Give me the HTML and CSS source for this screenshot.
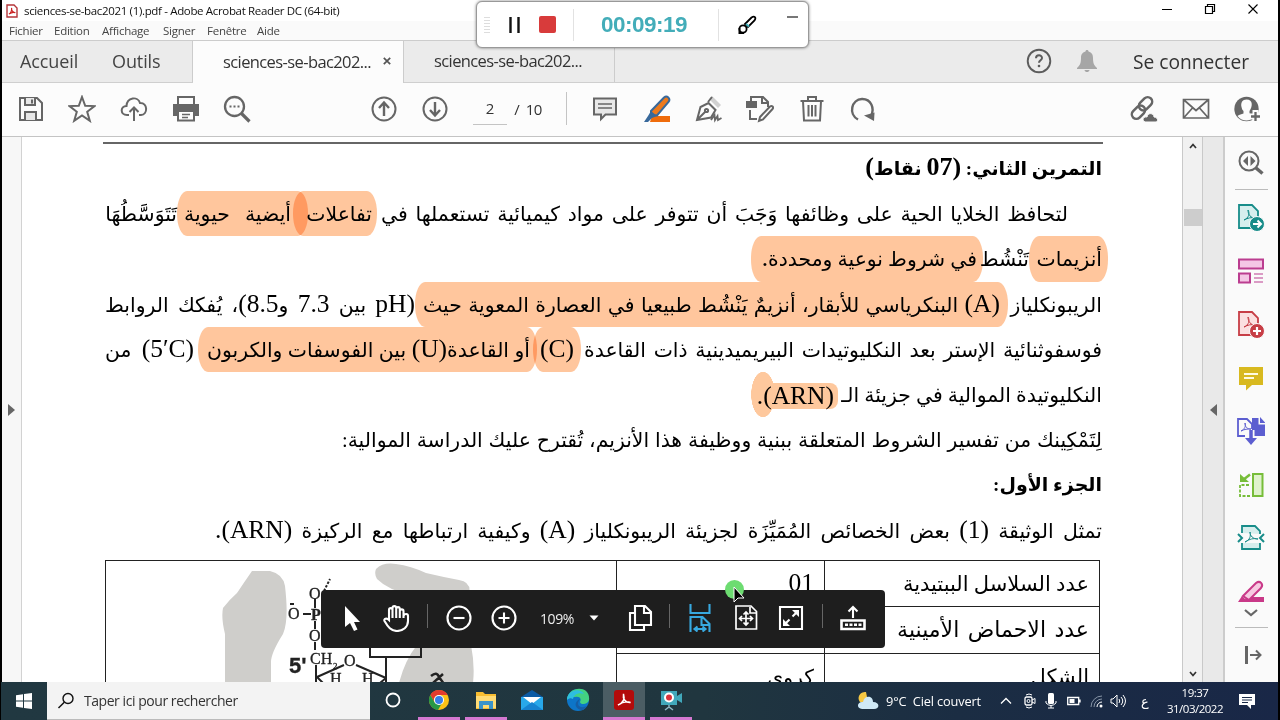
FILE: index.html
```html
<!DOCTYPE html>
<html lang="fr">
<head>
    <meta charset="UTF-8">
    <meta name="viewport" content="width=device-width, initial-scale=1.0">
    <title>sciences-se-bac2021 (1).pdf - Adobe Acrobat Reader DC (64-bit)</title>
    <link rel="stylesheet" href="styles.css">
</head>
<body>
    <div class="app">
        <header class="titlebar">
            <svg class="pdf-logo" viewBox="0 0 12 14"><path d="M1 1h7l3 3v9H1z" fill="#fff" stroke="#b5363a" stroke-width="1.4"/><path d="M3 10c2-1 3-4 2.600-6C5 6 7 9 9.300 8.500 7 8 5 8.500 3 10z" fill="none" stroke="#c22" stroke-width="1.200"/></svg>
            <span class="window-title">sciences-se-bac2021 (1).pdf - Adobe Acrobat Reader DC (64-bit)</span>
            <div class="window-buttons">
                <svg width="12" height="12" viewBox="0 0 12 12"><path d="M1 6.500h10" stroke="#000"/></svg>
                <svg width="12" height="12" viewBox="0 0 12 12"><path d="M1.500 3.500h7v7h-7zM3.500 3.500v-2h7v7h-2" fill="none" stroke="#000" stroke-width="1.200"/></svg>
                <svg width="12" height="12" viewBox="0 0 12 12"><path d="M1.500 1.500l9 9M10.500 1.500l-9 9" stroke="#000" stroke-width="1.100"/></svg>
            </div>
        </header>

        <nav class="menubar">
            <span class="m1">Fichier</span><span class="m2">Edition</span><span class="m3">Affichage</span><span class="m4">Signer</span><span class="m5">Fenêtre</span><span class="m6">Aide</span>
        </nav>

        <div class="tabs">
            <div class="tab-home"><span class="home">Accueil</span><span class="tools">Outils</span></div>
            <div class="tab active"><span>sciences-se-bac202...</span><svg width="8" height="8" viewBox="0 0 8 8"><path d="M.8.8l6.400 6.400M7.200.8L.8 7.200" stroke="#555" stroke-width="1.700"/></svg></div>
            <div class="tab"><span>sciences-se-bac202...</span></div>
            <div class="account">
                <svg width="26" height="26" viewBox="0 0 26 26"><circle cx="13" cy="13" r="11.300" fill="none" stroke="#5c5c5c" stroke-width="1.900"/><path d="M10 10.300c0-4 6-3.900 6-.4 0 2.300-3 2.300-3 4.800" fill="none" stroke="#5c5c5c" stroke-width="2"/><circle cx="13" cy="18" r="1.300" fill="#5c5c5c"/></svg>
                <svg class="bell" width="22" height="24" viewBox="0 0 22 24"><path d="M11 1c1 0 1.500.6 1.500 1.600C16 3.500 17 6 17 9c0 5 1 7.500 4 10v1H1v-1c3-2.500 4-5 4-10 0-3 1-5.500 4.500-6.400C9.500 1.600 10 1 11 1zM8.500 21h5c-.5 2.700-4.500 2.700-5 0z" fill="#a6a6a6"/></svg>
                <span>Se connecter</span>
            </div>
        </div>

        <div class="toolbar">
            <div class="group file">
                <svg viewBox="0 0 28 28"><path d="M3 3h17l5 5v17H3z"/><path d="M8 3v7h10V3M15 4.500v4M8 25v-8h11v8" fill="#e8e8e8"/></svg>
                <svg viewBox="0 0 28 28"><path d="M14 2l3.200 8.800 9.300.3-7.300 5.700 2.600 9L14 20.500 6.200 25.800l2.600-9L1.500 11.100l9.300-.3z"/></svg>
                <svg viewBox="0 0 28 28"><path d="M9 20H7c-7 0-7-9-.5-9C7 2 18 1 20 8c8-.5 8 11.500 1 12h-2M14 26V13M9.500 17L14 12.500l4.500 4.500"/></svg>
                <svg viewBox="0 0 28 28"><path d="M6 9V2h16v7"/><path d="M1 9h26v12h-4v-4H5v4H1z" fill="#666" stroke="none"/><path d="M6 16h16v9.500H6z" fill="#fcfcfc"/><path d="M10 19.500h8M10 22.500h6" stroke-width="1.500"/></svg>
                <svg viewBox="0 0 28 28"><circle cx="11.500" cy="11.500" r="9.500" stroke-width="2.300"/><path d="M18.500 18.500l8 8" stroke-width="3.200"/><path d="M6.500 11.500h2M10.500 11.500h2M14.500 11.500h2"/></svg>
            </div>
            <div class="group pages">
                <svg viewBox="0 0 28 28"><circle cx="14" cy="14" r="11.500"/><path d="M14 21V8M9 13l5-5.500 5 5.500" stroke-width="2.400"/></svg>
                <svg viewBox="0 0 28 28"><circle cx="14" cy="14" r="11.500"/><path d="M14 7v13M9 15l5 5.500 5-5.500" stroke-width="2.400"/></svg>
            </div>
            <span class="page-input">2</span><span class="slash">/</span><span class="page-count">10</span>
            <span class="sep"></span>
            <div class="group edit">
                <svg viewBox="0 0 28 28"><path d="M3 3.500h22v16H14.500L10 24v-4.500H3z" fill="#e8e8e8"/><path d="M7 9h14M7 13h14" stroke-width="1.500"/></svg>
                <svg viewBox="0 0 28 28"><path d="M9 21h18v6H7z" fill="#ef6c0c" stroke="none"/><path d="M8 16L21 2.500c3-2.500 7 1 4.500 4.500L14 20.500 8 20z" fill="#ed7a1d" stroke="#38699b"/><path d="M8 16l6 5-5 2-4 4H1l4-6z" fill="#38699b" stroke="none"/></svg>
                <svg viewBox="0 0 28 28"><path d="M14 4l3-3 9 9-3 3z" fill="#d0d0d0" stroke="none"/><path d="M2 25L5.500 12l8-4 7 7-4.500 7.500zM2 25l8.500-8.500M13 7l4-5"/><circle cx="11.500" cy="15.500" r="1.600"/><path d="M16 25l3.500-5 .5 5 2.500-4 .5 4 3.500-2" stroke-width="1.800"/></svg>
                <svg viewBox="0 0 28 28"><path d="M5 7V2h12l5 5v5M16 3v5h6M4 15v9h7"/><path d="M0 6h11v7H0z" fill="#666" stroke="none"/><path d="M13 26l1-4L24 11.500c2-1.500 4 .7 2.500 2.500L17 24.500z"/></svg>
                <svg viewBox="0 0 28 28"><path d="M2.500 6h23M10 6V2h8v4M5 6l1 19.500h16L23 6M10.500 10v11.500M14 10v11.500M17.500 10v11.500"/></svg>
                <svg viewBox="0 0 28 28"><path d="M9 24.500C-1 19 2.500 4.500 13 4c9-.2 13 9 9 17" stroke-width="2.400"/><path d="M15 20.500l10.500-3-.5 8.500z" fill="#666" stroke="none"/></svg>
            </div>
            <div class="group share">
                <svg viewBox="0 0 28 28"><g transform="rotate(-45 12 13)"><rect x="-1" y="9" width="15" height="9" rx="4.500" stroke-width="2.500"/><rect x="10" y="8" width="15" height="9" rx="4.500" stroke-width="2.500"/></g><path d="M15 27c-4-2-1-6 2-5 1-5 7-4 7 0 4 0 5 5 1 5z" fill="#666" stroke="#fcfcfc" stroke-width="1"/></svg>
                <svg viewBox="0 0 28 28"><path d="M1.500 4.500h25v18.500h-25zM2 5l12 10.500L26 5M2 22.500L10.500 13M26 22.500L17.500 13" stroke-width="1.700"/></svg>
                <svg viewBox="0 0 28 28"><circle cx="13.500" cy="14" r="12.200" fill="#666" stroke="none"/><path d="M13.500 4.500c-4 0-6 3-5 7.500.4 2 1 3 2 4v2.500c-2 1-4 1-6 2.500 2 3 6 4.500 9 4.500s5-1 8-4.500c-1-1.500-3-1.500-5-2.500V16c3-4 4-11.500-3-11.500z" fill="#fcfcfc" stroke="none"/><path d="M22.500 15v13M16 21.500h12" stroke="#fcfcfc" stroke-width="6"/><path d="M22.500 17v9M18 21.500h9" stroke-width="2.300"/></svg>
            </div>
        </div>

        <main class="workspace">
            <aside class="nav-strip"><i class="arrow right"></i></aside>

            <section class="document" lang="ar" dir="rtl">
                <div class="line bold"><span class="s1">التمرين الثاني: <em>(07</em> نقاط<em>)</em></span></div>
                <div class="line indent">
                    <span class="s2a">لتحافظ الخلايا الحية على وظائفها وَجَبَ أن تتوفر على مواد كيميائية تستعملها في</span>
                    <span class="s2b mark">تفاعلات</span>
                    <span class="s2c mark">أيضية حيوية</span>
                    <span class="s2d">تَتَوَسَّطُهَا</span>
                </div>
                <div class="line">
                    <span class="s3a mark">أنزيمات</span>
                    <span class="s3b">تَنْشُط</span>
                    <span class="s3c mark">في شروط نوعية ومحددة<b>.</b></span>
                </div>
                <div class="line">
                    <span class="s4a">الريبونكلياز</span>
                    <span class="s4b mark"><b>(A)</b> البنكرياسي للأبقار، أنزيمٌ يَنْشُط طبيعيا في العصارة المعوية حيث</span>
                    <span class="s4c"><b>(pH</b> بين <b>7.3</b> و<b>8.5)</b>، يُفكك الروابط</span>
                </div>
                <div class="line">
                    <span class="s5a">فوسفوثنائية الإستر بعد النكليوتيدات البيريميدينية ذات القاعدة</span>
                    <span class="s5b mark"><b>(C)</b></span>
                    <span class="s5c mark">أو القاعدة<b>(U)</b> بين الفوسفات والكربون</span>
                    <span class="s5d"><b>(5′C)</b> من</span>
                </div>
                <div class="line">
                    <span class="s6a">النكليوتيدة الموالية في جزيئة الـ</span>
                    <span class="s6b"><b>(ARN).</b></span>
                </div>
                <div class="line"><span class="s7">لِتَمْكِينك من تفسير الشروط المتعلقة ببنية ووظيفة هذا الأنزيم، تُقترح عليك الدراسة الموالية:</span></div>
                <div class="line bold"><span class="s8">الجزء الأول:</span></div>
                <div class="line"><span class="s9">تمثل الوثيقة <b>(1)</b> بعض الخصائص المُمَيِّزَة لجزيئة الريبونكلياز <b>(A)</b> وكيفية ارتباطها مع الركيزة <b>(ARN).</b></span></div>

                <div class="grid">
                    <div class="names"><span class="r1">عدد السلاسل الببتيدية</span><span class="r2">عدد الاحماض الأمينية</span><span class="r3">الشكل</span></div>
                    <div class="values"><span><b>01</b></span><span></span><span>كروي</span></div>
                    <svg class="molecule" direction="ltr" width="511" height="122" viewBox="106 561 511 122">
                        <path d="M253 571H271Q284 574 286 586C288 604 289 622 284 634Q272 653 272 662V683H226V634Q222 618 224 608Q230 600 238 593 246 581 253 571zM377 569Q384 562 397 564 412 566 427 573 444 577 460 580 473 582 470 595H412Q389 590 378 579 375 574 377 569zM400 683Q406 660 418 645H472Q476 665 474 683z" fill="#cfcecb"/>
                        <g fill="none" stroke="#222" stroke-width="2">
                            <path d="M316 599v9M316 621v8M316 642v8M317 665v18M304 614h8M291 604h4"/>
                            <path d="M325 591l6-12" stroke-dasharray="2.500 1.500"/>
                            <path d="M318 677l27-12M357 665l30 13M387 683v-26M371 648v9h51v-9M318 677l6 6M387 678l-6 5"/>
                        </g>
                        <g class="atoms">
                            <text x="310" y="599">O</text><text x="289" y="619">O</text><text class="strong" x="312" y="620">P</text><text x="310" y="641">O</text><text x="311" y="664">CH</text><text class="small" x="334" y="669">2</text><text x="345" y="666">O</text><text x="331" y="684">H</text><text x="363" y="684">H</text><text class="five" x="290" y="673">5'</text>
                        </g>
                        <path d="M432 676q6-5 8 1l5 7M444 674l-10 9" fill="none" stroke="#222" stroke-width="2.500"/>
                    </svg>
                </div>
            </section>

            <div class="scrollbar">
                <svg width="8" height="6" viewBox="0 0 8 6"><path d="M1 5l3-3.500L7 5" fill="none" stroke="#333" stroke-width="1.700"/></svg>
                <i class="thumb"></i>
                <svg width="8" height="6" viewBox="0 0 8 6"><path d="M1 1l3 3.500L7 1" fill="none" stroke="#333" stroke-width="1.700"/></svg>
            </div>
            <div class="panel-strip"><i class="arrow left"></i></div>

            <aside class="tool-panel">
                <svg class="find" viewBox="0 0 28 28"><g fill="none" stroke="#666"><circle cx="12" cy="13" r="9.500" stroke-width="2"/><path d="M19 20l6.500 5.500" stroke-width="3.500"/></g><path d="M11 8v10l-5-5zM13.500 8v10l5-5z" fill="#666"/></svg>
                <hr>
                <svg viewBox="0 0 28 28"><path d="M2 2h13l6 6v17H2z" fill="#d6eeed" stroke="#178c89" stroke-width="1.800"/><path d="M7 17c5-2 6-7 4-10 0 5 3 8 7 8-4-1-7 0-11 2z" fill="none" stroke="#178c89"/><circle cx="20" cy="21" r="7.500" fill="#178c89" stroke="#fafafa"/><path d="M16 21h7M20.500 17.500L24 21l-3.500 3.500" fill="none" stroke="#fff" stroke-width="2"/></svg>
                <svg viewBox="0 0 28 28"><path d="M2 2.500h24v9H2zM2 16.500h11v9H2z" fill="#f4c6e5" stroke="#bb3d90" stroke-width="2"/><path d="M17 17h9M17 21h9M17 25h9" stroke="#bb3d90"/></svg>
                <svg viewBox="0 0 28 28"><path d="M2 2h13l6 6v17H2z" fill="#fbe0e0" stroke="#c73e46" stroke-width="1.800"/><path d="M7 17c5-2 6-7 4-10 0 5 3 8 7 8-4-1-7 0-11 2z" fill="none" stroke="#c73e46"/><circle cx="20" cy="21" r="7.500" fill="#c73e46" stroke="#fafafa"/><path d="M16 21h8M20 17v8" stroke="#fff" stroke-width="2.200"/></svg>
                <svg viewBox="0 0 28 28"><path d="M2 3h24v18H15l-6 5.500V21H2z" fill="#d8b91f"/><path d="M7 10h14M7 14h10" stroke="#fffbe0" stroke-width="1.800"/></svg>
                <svg viewBox="0 0 28 28"><path d="M15 1h6.500v6.500H28V19H15z" fill="#5c5ed0"/><path d="M23 0l5.500 6H23z" fill="#5c5ed0"/><path d="M8 19H1V2h9l5 5v5" fill="#fafafa" stroke="#5c5ed0" stroke-width="1.800"/><path d="M4 14c4-2 5-5 4-8 0 4 2 6 6 6-4 0-6 0-10 2z" fill="none" stroke="#5c5ed0"/><path d="M14 13v9" stroke="#fafafa" stroke-width="7"/><path d="M14 13v9" stroke="#5c5ed0" stroke-width="3.500"/><path d="M8 21h12l-6 7z" fill="#5c5ed0"/></svg>
                <svg viewBox="0 0 28 28"><path d="M16 3h9.500v22H16z" fill="#dff2cc" stroke="#77bd39" stroke-width="2"/><path d="M12 14H3v11h10" fill="none" stroke="#77bd39" stroke-width="1.800" stroke-dasharray="3 1.500"/><path d="M13 3.500L6 9" stroke="#77bd39" stroke-width="2.500"/><path d="M3 3v8h9z" fill="#77bd39"/></svg>
                <svg viewBox="0 0 28 28"><path d="M5 9V2h13l5 5v3M5 19v6h18v-6" fill="#d6eeed" stroke="#178c89" stroke-width="1.800"/><path d="M8 18c5-2 6-6 5-10 0 4 3 7 8 7-5-1-8 0-13 3z" fill="none" stroke="#178c89"/><path d="M1 10l4 4-4 4M27 10l-4 4 4 4" fill="none" stroke="#178c89" stroke-width="2"/></svg>
                <svg class="cut" viewBox="0 0 28 24"><path d="M10 19h17v5H6z" fill="#c93988"/><path d="M6 18L19 5c4-3 8 1 5 5L12 22z" fill="#f7cae2" stroke="#c93988" stroke-width="2"/><path d="M5 18l6 6H1z" fill="#c93988"/></svg>
                <svg class="more" viewBox="0 0 16 9"><path d="M2 2l6 5 6-5" fill="none" stroke="#666" stroke-width="2.200"/></svg>
                <hr class="bottom">
                <svg class="exit" viewBox="0 0 20 20"><path d="M3.500 1v18" stroke="#666" stroke-width="3"/><path d="M7 10h10M13 5.500l4.500 4.500-4.500 4.500" fill="none" stroke="#666" stroke-width="2"/></svg>
            </aside>
        </main>

        <footer class="taskbar">
            <div class="start"><svg width="16" height="16" viewBox="0 0 16 16"><path d="M0 2.200L7 1.200v6.300H0zM8 1l8-1v7.500H8zM0 8.500h7v6.300l-7-1zM8 8.500h8V16l-8-1z" fill="#fff"/></svg></div>
            <div class="search"><svg width="18" height="18" viewBox="0 0 18 18"><circle cx="11" cy="6.500" r="5" fill="none" stroke="#111" stroke-width="1.400"/><path d="M7.300 10.300L1.500 16" stroke="#111" stroke-width="1.500"/></svg><span>Taper ici pour rechercher</span></div>
            <div class="apps">
                <div><svg viewBox="0 0 24 24"><circle cx="12" cy="12" r="6.500" fill="none" stroke="#fff" stroke-width="1.800"/></svg></div>
                <div class="open"><svg viewBox="0 0 24 24"><circle cx="12" cy="12" r="10" fill="#fbc116"/><path d="M3.300 7A10 10 0 0 1 20.700 7H12a5 5 0 0 0-4.300 7.500z" fill="#e33b2e"/><path d="M3.300 7A10 10 0 0 0 11 22l4.300-7.500h-7.600z" fill="#279847"/><circle cx="12" cy="12" r="5" fill="#fff"/><circle cx="12" cy="12" r="4" fill="#377ee8"/></svg></div>
                <div class="open"><svg viewBox="0 0 24 24"><path d="M2 4h7l2 2h11v15H2z" fill="#f8bd31"/><path d="M2 8h20v12H2z" fill="#ffdb75"/><path d="M5 13h14v8h-4v-4H9v4H5z" fill="#3c93c9"/></svg></div>
                <div><svg viewBox="0 0 24 24"><path d="M1 9l11-7 11 7v13H1z" fill="#0b5ba5"/><path d="M1 9h22v13H1z" fill="#28a8ea"/><path d="M3 9h18l-9 7z" fill="#fff"/><path d="M1 22l11-8 11 8z" fill="#1683d1"/></svg></div>
                <div><svg viewBox="0 0 24 24"><circle cx="12" cy="12" r="11" fill="#0d75c8"/><path d="M1 12C2-3 25-3 23 12c-1 5-9 5-9 2 2-4-1-6-5-5-4 0-8 2-8 3z" fill="#43d282"/><path d="M1 12C1 2 14-1 18 6c-5-2-10 0-11 5-2-1-4-1-6 1z" fill="#2ebee0"/><path d="M14 11c-5 7 1 10 7 7-1 1-2 3-4 4C9 22 7 14 14 11z" fill="#165ea5"/></svg></div>
                <div class="open current"><svg viewBox="0 0 24 24"><rect x="2" y="2" width="20" height="20" rx="3" fill="#b30b0b"/><path d="M6 17c5-2 7-6 5.500-11-1 5 2 9 7 8.500-4-1.500-8-.5-12.500 2.500z" fill="none" stroke="#fff" stroke-width="1.500"/></svg></div>
                <div class="open"><svg viewBox="0 0 24 24"><path d="M2 3h16v14H2zM18 8l5-3v10l-5-3z" fill="#41a8bb"/><circle cx="10" cy="9.500" r="5" fill="#fff"/><circle cx="10" cy="9.500" r="3" fill="#d9333b"/><path d="M10 17v3M6 22l4-3 4 3" fill="none" stroke="#8db7c4" stroke-width="1.500"/></svg></div>
            </div>
            <div class="tray">
                <svg class="weather" width="22" height="20" viewBox="0 0 22 20"><path d="M9 1C4 0-1 6 3 11h8z" fill="#f6c843"/><path d="M5 18c-6 0-5-8 1-7C7 4 16 4 16 11c7 0 7 7 1 7z" fill="#cfe9f6"/></svg>
                <span class="temp">9°C&nbsp; Ciel couvert</span>
                <svg class="up" width="12" height="8" viewBox="0 0 12 8"><path d="M1 6.500l5-5 5 5" fill="none" stroke="#fff" stroke-width="1.300"/></svg>
                <svg class="t1" width="12" height="16" viewBox="0 0 12 16"><rect x="1" y="4" width="7" height="8" rx="1.500" fill="none" stroke="#fff" stroke-width="1.300"/><circle cx="4.500" cy="8" r="1.500" fill="none" stroke="#fff"/><path d="M8 7l3-1.500v5L8 9M2 2q3-2 6 0M2 14q3 2 6 0" fill="none" stroke="#fff"/></svg>
                <svg class="t2" width="12" height="16" viewBox="0 0 12 16"><rect x="3" y="0" width="6" height="11" rx="1.500" fill="#fff"/><path d="M1 8v2q5 5 10 0V8M6 12v3M3 15h6" fill="none" stroke="#fff"/></svg>
                <svg class="t3" width="14" height="10" viewBox="0 0 14 10"><path d="M.7 1.500h11v7H.7zM13 3.500v3" fill="none" stroke="#fff" stroke-width="1.300"/><path d="M2.500 3h5v4h-5z" fill="#fff"/></svg>
                <svg class="t4" width="13" height="13" viewBox="0 0 13 13"><path d="M1 12A11 11 0 0 1 12 1M4 12a8 8 0 0 1 8-8" fill="none" stroke="#8694a6"/><path d="M7 12a5 5 0 0 1 5-5" fill="none" stroke="#fff"/><circle cx="11" cy="11" r="1.500" fill="#fff"/></svg>
                <svg class="t5" width="16" height="14" viewBox="0 0 16 14"><path d="M1 5h2l4-4v12L3 9H1zM9 5q1.500 2 0 4M11 3q3.500 4 0 8M13 1q5 6 0 12" fill="none" stroke="#fff"/></svg>
                <span class="lang">ع</span>
                <div class="clock"><span>19:37</span><span>31/03/2022</span></div>
                <svg class="notes" width="18" height="17" viewBox="0 0 18 17"><path d="M1 1h16v11h-4v4l-4-4H1z" fill="#fff"/><path d="M4 4.500h10M4 7h10M4 9.500h6" stroke="#1a2a48"/></svg>
            </div>
        </footer>
    </div>

    <!-- screen recorder -->
    <div class="recorder">
        <i class="grip"></i>
        <svg class="pause" width="14" height="18" viewBox="0 0 14 18"><path d="M2.500 1v16M10.500 1v16" stroke="#111" stroke-width="2.400"/></svg>
        <i class="stop"></i>
        <span class="time">00:09:19</span>
        <svg class="brush" width="20" height="20" viewBox="0 0 20 20"><path d="M8 9l6.500-6.500c3-2 5 0 3 3L11 12z" fill="#fff" stroke="#000" stroke-width="1.800"/><path d="M9 9l3 2.500" stroke="#43b5c0" stroke-width="2"/><circle cx="6" cy="14" r="3.600" fill="#fff" stroke="#000" stroke-width="1.800"/><path d="M2.400 13v5H7" fill="none" stroke="#000" stroke-width="1.800"/></svg>
        <i class="minimize"></i>
    </div>

    <!-- page controls -->
    <div class="controls">
        <svg class="c-arrow" viewBox="0 0 28 28"><path d="M8 2v21l5-4 4 8 3.500-1.500L17 18h6z" fill="#fff"/></svg>
        <svg class="c-hand" viewBox="0 0 28 28"><path d="M7 16V6c0-2.500 3.500-2.500 3.500 0V4c0-2.500 3.700-2.500 3.700 0v1c0-2.500 3.600-2.500 3.600 0v2c0-2.200 3.700-2.200 3.700 0V12c1-3 4.500-2.500 4.500 0v5c0 6-5 10-11 10-6 0-9-4-12.500-10-1-2 2-3.500 4.500-1zM10.500 6v8M14.200 5v9M17.800 7v7M21.500 10v4"/></svg>
        <i></i>
        <svg class="c-minus" viewBox="0 0 28 28"><circle cx="14" cy="14" r="11.500"/><path d="M8.500 14h11"/></svg>
        <svg class="c-plus" viewBox="0 0 28 28"><circle cx="14" cy="14" r="11.500"/><path d="M8.500 14h11M14 8.500v11"/></svg>
        <span class="zoom">109%</span>
        <svg class="c-caret" viewBox="0 0 10 6"><path d="M.5.500h9L5 5.500z" fill="#fff" stroke="none"/></svg>
        <svg class="c-pages" viewBox="0 0 28 28"><path d="M9 2h10l6 6v13H9zM18 2v7h7M9 9H4v17h14v-5"/></svg>
        <i></i>
        <svg class="c-width" viewBox="0 0 28 28"><path d="M4.500 0v9h19V0M4.500 28V13h12l7 7v8M15.500 14v7h7M9 25h10M11.500 22.500L8.500 25l3 2.500M16.500 22.500l3 2.500-3 2.500"/></svg>
        <svg class="c-page" viewBox="0 0 28 28"><path d="M4 2h15l5.500 5.500V25H4zM18 3v6h6M14 8v13M7.500 14.500h13M11.500 10.500L14 8l2.500 2.500M11.500 18.500L14 21l2.500-2.500M10 12l-2.500 2.500L10 17M18 12l2.500 2.500L18 17" stroke-width="1.700"/></svg>
        <svg class="c-full" viewBox="0 0 28 28"><path d="M3 3h22v22H3z"/><path d="M15 6h7v7zM6 15v7h7z" fill="#fff" stroke="none"/><path d="M15.500 12.500l4-4M8 20l4.500-4.500"/></svg>
        <i></i>
        <svg class="c-dock" viewBox="0 0 28 28"><path d="M14 14V3M9.500 7.500L14 3l4.500 4.500"/><path d="M2.500 16.500h23v8.500h-23z" stroke-width="2.600"/><path d="M6 20.700h3M10.500 20.700h3M15 20.700h3M19.500 20.700h3" stroke-width="2.600"/></svg>
    </div>

    <div class="pointer"><svg width="13" height="18" viewBox="0 0 13 18"><path d="M2 1v15l4-4h6z" fill="#000" stroke="#fff"/></svg></div>
</body>
</html>
```
FILE: styles.css
```css
* {
    box-sizing: border-box;
}

body {
    margin: 0;
    width: 1280px;
    height: 720px;
    overflow: hidden;
    background: #000;
    font-family: "Open Sans", "Noto Sans", sans-serif;
    color: #333;
}

svg {
    display: block;
    flex-shrink: 0;
}

.app {
    width: 1280px;
    height: 720px;
    display: flex;
    flex-direction: column;
}

/* title and menu */
.titlebar {
    height: 21px;
    margin: 0 2px;
    background: #fff;
    display: flex;
    align-items: center;
    padding: 0 32px 0 4px;
}

.pdf-logo {
    width: 12px;
    height: 14px;
}

.window-title {
    margin-left: 6px;
    width: 500px;
    font-size: 11.500px;
    letter-spacing: -.34px;
    color: #111;
    white-space: nowrap;
}

.window-buttons {
    margin-left: auto;
    display: flex;
    gap: 31px;
    margin: -3px -13px 0 auto;
}

.menubar {
    height: 20px;
    margin: 0 2px;
    background: #fafafa;
    display: flex;
    align-items: center;
    padding-left: 7px;
    font-size: 11.500px;
    letter-spacing: -.25px;
    color: #444;
    border-bottom: 1px solid #ccc;
    white-space: nowrap;
}

.m1 { width: 45px; }
.m2 { width: 48px; }
.m3 { width: 61px; }
.m4 { width: 44px; }
.m5 { width: 50px; }

/* tabs */
.tabs {
    height: 42px;
    margin: 0 2px;
    background: #ebebeb;
    border-bottom: 1px solid #cfcfcf;
    display: flex;
    font-size: 16.500px;
    white-space: nowrap;
}

.tab-home {
    width: 191px;
    display: flex;
    align-items: center;
    padding: 0 0 2px 18px;
    border-right: 1px solid #ccc;
    font-size: 18px;
    letter-spacing: -.1px;
    color: #444;
}

.home {
    width: 92px;
}

.tab {
    width: 211px;
    padding: 0 0 2px 30px;
    display: flex;
    align-items: center;
    border-right: 1px solid #ccc;
    letter-spacing: -.6px;
}

.tab span {
    width: 150px;
}

.tab.active {
    background: #fcfcfc;
    height: 42px;
}

.tab svg {
    margin-left: 10px;
}

.account {
    margin-left: auto;
    display: flex;
    align-items: center;
    padding: 0 29px 2px 0;
    font-size: 19.200px;
}

.bell {
    margin: 0 35px 0 24px;
}

.account span {
    padding-top: 2px;
}

/* main toolbar */
.toolbar {
    height: 54px;
    margin: 0 2px;
    background: #fcfcfc;
    border-bottom: 1px solid #c4c4c4;
    display: flex;
    align-items: center;
    padding: 0 0 2px 3px;
    font-size: 15px;
}

.group {
    display: flex;
}

.group svg {
    width: 28px;
    height: 28px;
    margin: 0 11.800px;
    fill: none;
    stroke: #666;
    stroke-width: 2;
}

.pages {
    margin-left: 95px;
}

.page-input {
    width: 34px;
    height: 32px;
    line-height: 31px;
    margin-left: 12px;
    border-bottom: 1px solid #c4c4c4;
    text-align: center;
}

.slash {
    margin-left: 7px;
}

.page-count {
    margin-left: 6px;
    width: 20px;
    letter-spacing: -.5px;
}

.sep {
    width: 1px;
    height: 33px;
    background: #c4c4c4;
    margin: 0 13px 0 20px;
}

.share {
    margin-left: auto;
    margin-right: 5px;
}

/* document area */
.workspace {
    height: 545px;
    margin: 0 2px;
    display: flex;
    overflow: hidden;
    background: #fff;
}

.nav-strip {
    width: 20px;
    background: #f7f7f7;
    border-right: 1px solid #d2d2d2;
    display: flex;
    align-items: center;
    justify-content: center;
}

.arrow {
    border: 6px solid transparent;
}

.arrow.right {
    border-right: 0;
    border-left: 7px solid #666;
}

.arrow.left {
    border-left: 0;
    border-right: 7px solid #666;
}

.document {
    width: 1161px;
    padding: 5px 80px 0 82px;
    background: #fff;
    overflow: hidden;
    color: #000;
    font-family: "Liberation Serif", "DejaVu Sans", serif;
    font-size: 20.400px;
}

.document::before {
    content: "";
    display: block;
    height: 2px;
    margin: 0 0 2px -1px;
    background: #666;
}

.line {
    height: 45.200px;
    display: flex;
    align-items: center;
    white-space: nowrap;
    margin-right: 1px;
}

.line > span {
    height: 45.200px;
    line-height: 46px;
    flex-shrink: 0;
    text-align: justify;
    text-align-last: justify;
}

.line b,
.grid b {
    font-weight: normal;
    font-size: 25.500px;
    line-height: 20px;
}

.bold {
    font-weight: bold;
    font-size: 19px;
}

.bold em {
    font-style: normal;
    font-size: 26px;
    line-height: 20px;
}

.indent {
    padding-right: 34px;
}

/* overlapping highlighter strokes darken each other */
.mark {
    background: rgba(255, 146, 68, .52);
    border-radius: 10px / 22px;
    mix-blend-mode: multiply;
}

.s1 { width: 228px; }
.s2a { width: 687px; }
.line .s2b { width: 84px; margin-right: 4px; padding: 0 5px 0 9px; }
.line .s2c { width: 131px; margin-right: -15px; padding: 0 17px 0 7px; }
.s2d { width: 69px; }
.line .s3a { width: 79px; margin-right: -6px; padding: 0 6px 0 9px; }
.s3b { width: 46px; }
.line .s3c { width: 232px; margin-right: 0; padding: 0 6px 0 11px; }
.s4a { width: 92px; }
.line .s4b { width: 593px; margin-right: 2px; padding: 0 8px; }
.s4c { width: 310px; }
.s5a { width: 518px; }
.line .s5b { width: 48px; margin-right: 3px; padding: 0 7px 0 6px; }
.line .s5c { width: 339px; margin-right: -4px; padding: 0 7px 0 9px; }
.s5d { width: 89px; margin-right: 4px; }
.s6a { width: 259px; }

.s6b {
    width: 87px;
    margin-right: 5px;
    padding-left: 1px;
    background: radial-gradient(ellipse 12px 23px at 12px 50%, #fec89d 97%, transparent);
}

.s6b b {
    display: block;
    height: 26px;
    margin: 11px 0 0 0;
    padding-right: 4px;
    line-height: 26px;
    border-radius: 8px;
    background: linear-gradient(#fec89d, #fec89d) 20px 0 no-repeat;
}

.s7 { width: 760px; }
.s8 { width: 107px; }
.s9 { width: 887px; }

/* table */
.grid {
    width: 995px;
    height: 160px;
    margin: 7px 3px 0 0;
    border: 1px solid #222;
    display: grid;
    grid-template-columns: 275px 208px 1fr;
}

.names,
.values {
    display: grid;
    grid-template-rows: 46px 47px 47px;
    border-left: 1px solid #222;
}

.names span,
.values span {
    padding: 0 10px;
    line-height: 46px;
    border-bottom: 1px solid #222;
    white-space: nowrap;
}

.names {
    font-size: 21px;
}

.names .r2 {
    font-size: 22px;
    word-spacing: 3px;
}

.atoms {
    font-family: "Liberation Serif", serif;
    font-size: 16px;
    fill: #222;
    stroke: #222;
    stroke-width: .3px;
}

.atoms .strong {
    font-weight: bold;
}

.atoms .small {
    font-size: 9px;
}

.atoms .five {
    font: bold 22px "Liberation Sans", sans-serif;
}

/* right side */
.scrollbar {
    width: 21px;
    margin-left: -1px;
    background: #f1f1f1;
    border: solid #c9c9c9;
    border-width: 0 1px;
    display: flex;
    flex-direction: column;
    align-items: center;
    padding: 6px 0 5px;
}

.thumb {
    width: 18px;
    height: 17px;
    margin: 60px 0 auto;
    background: #cdcdcd;
}

.panel-strip {
    width: 20px;
    background: #e9e9e9;
    display: flex;
    align-items: center;
    justify-content: center;
}

.tool-panel {
    width: 55px;
    background: #fafafa;
    border-left: 2px solid #ccc;
    display: flex;
    flex-direction: column;
    align-items: center;
    padding: 11px 1px 0 0;
}

.tool-panel svg {
    width: 28px;
    height: 28px;
    margin-bottom: 25.500px;
}

.tool-panel hr {
    width: 33px;
    border: 0;
    height: 1px;
    flex-shrink: 0;
    background: #bbb;
    margin: 13px 0;
}

.tool-panel .find {
    margin: 0;
}

.tool-panel .cut {
    height: 24px;
    margin-bottom: 6px;
}

.tool-panel .more {
    width: 16px;
    height: 9px;
    margin: 0;
}

.tool-panel .bottom {
    margin: 10px 0 17px;
}

.tool-panel .exit {
    width: 20px;
    height: 20px;
    margin: 0 -4px 0 0;
}

/* taskbar */
.taskbar {
    height: 38px;
    margin: 0 2px 0 1px;
    display: flex;
    background: linear-gradient(90deg, #213841, #20363f 55%, #1b2d43 75%, #192747);
    color: #fff;
    white-space: nowrap;
}

.start {
    width: 46px;
    display: flex;
    align-items: center;
    justify-content: center;
}

.search {
    width: 323px;
    background: #f3f3f3;
    color: #333;
    display: flex;
    align-items: center;
    padding-left: 10px;
    gap: 9px;
    font-size: 14px;
    letter-spacing: -.45px;
    border-bottom: 1px solid #bbb;
}

.apps {
    display: flex;
    padding-left: 2px;
}

.apps div {
    width: 42px;
    margin-right: 4.300px;
    display: flex;
    align-items: center;
    justify-content: center;
    border-bottom: 3px solid transparent;
}

.apps svg {
    width: 24px;
    height: 24px;
}

.apps .open {
    border-color: #d478d1;
}

.apps .current {
    background: #4b5d64;
}

.tray {
    margin-left: auto;
    width: 421px;
    display: flex;
    align-items: center;
    font-size: 12.800px;
}

.temp {
    width: 98px;
    margin: 0 16px 0 7px;
    letter-spacing: -.15px;
}

.t1 { margin-left: 12px; }
.t2 { margin-left: 9px; }
.t3 { margin-left: 10px; }
.t4 { margin-left: 9px; }
.t5 { margin-left: 7px; }

.lang {
    margin-left: 15px;
    width: 10px;
    font-family: "DejaVu Sans", sans-serif;
}

.clock {
    width: 60px;
    margin-left: 14px;
    display: flex;
    flex-direction: column;
    align-items: center;
    font-size: 11.500px;
    line-height: 16px;
    letter-spacing: -.5px;
}

.notes {
    margin-left: 13px;
}

/* windows lying over the page */
.recorder {
    position: absolute;
    left: 476px;
    top: 1px;
    width: 333px;
    height: 47px;
    border: 1px solid #999;
    border-radius: 6px;
    background: #fff;
    box-shadow: 0 0 3px rgba(0, 0, 0, .5);
    display: flex;
    align-items: center;
}

.grip {
    width: 6px;
    height: 16px;
    margin: 0 18px 0 7px;
    background: repeating-linear-gradient(#ddd 0 1px, #fff 1px 3px);
}

.stop {
    width: 17px;
    height: 17px;
    margin-left: 17px;
    border-radius: 2px;
    background: #d83b3b;
}

.time {
    width: 146px;
    margin-left: 17px;
    border: solid #e2e2e2;
    border-width: 0 1px;
    text-align: center;
    font: bold 22.500px/32px "Liberation Sans", sans-serif;
    letter-spacing: -.5px;
    padding-right: 4px;
    color: #43adb9;
}

.brush {
    margin-left: 18px;
}

.minimize {
    width: 11px;
    height: 2px;
    margin: -15px 0 0 30px;
    background: #777;
}

.controls {
    position: absolute;
    left: 321px;
    top: 590px;
    width: 564px;
    height: 58px;
    padding: 0 8px 2px;
    border-radius: 4px;
    background: #1e1e1e;
    color: #eee;
    display: grid;
    grid-template-columns: 44px 46px 17px 45px 46px 60px 14px 78px 0 47px 40px 50px 13px 48px;
    align-items: center;
    justify-items: center;
    font-size: 14px;
}

.controls svg {
    width: 28px;
    height: 28px;
    fill: none;
    stroke: #fff;
    stroke-width: 2.100;
}

.controls .c-arrow {
    stroke: none;
}

.controls .c-caret {
    width: 10px;
    height: 6px;
}

.controls .c-width {
    stroke: #38a9e0;
    margin-left: -5px;
}

.controls i {
    width: 1px;
    height: 24px;
    margin-top: -4px;
    background: #666;
}

.controls .c-pages + i {
    margin-left: -19px;
}

.zoom {
    letter-spacing: -.4px;
}

.pointer {
    position: absolute;
    left: 725px;
    top: 580px;
    width: 19px;
    height: 19px;
    border-radius: 50%;
    background: #6ddc71;
    padding: 6px 0 0 7px;
}
```
